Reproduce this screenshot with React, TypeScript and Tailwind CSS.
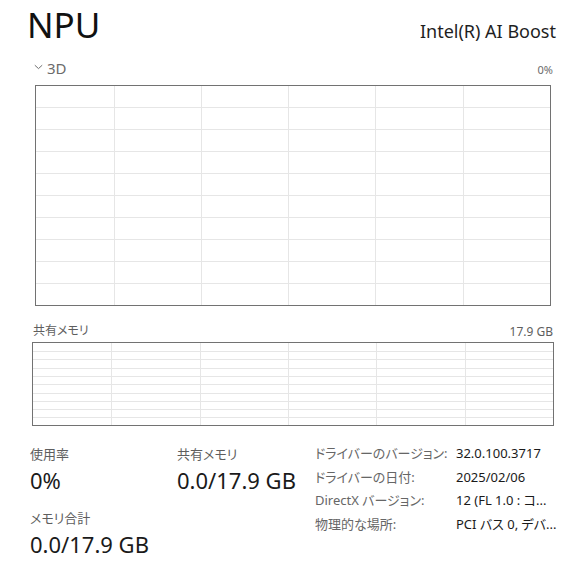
import React from "react";

const FONT = '"Noto Sans", "Noto Sans CJK JP", sans-serif';

function Grid1() {
  const vs = [78.5, 165.5, 252.5, 339.5, 427.5];
  const hs = [21.5, 43.5, 65.5, 87.5, 109.5, 131.5, 153.5, 175.5, 197.5];
  return (
    <svg width="514" height="219" className="block" shapeRendering="crispEdges">
      {hs.map((y) => (
        <line key={"h" + y} x1="0" x2="514" y1={y} y2={y} stroke="#e6e6e6" strokeWidth="1" />
      ))}
      {vs.map((x) => (
        <line key={"v" + x} x1={x} x2={x} y1="0" y2="219" stroke="#e6e6e6" strokeWidth="1" />
      ))}
    </svg>
  );
}

function Grid2() {
  const vs = [78.5, 167.5, 255.5, 343.5, 432.5];
  const hs = [8.5, 16.5, 25.5, 33.5, 41.5, 50.5, 58.5, 66.5, 74.5];
  return (
    <svg width="520" height="82" className="block" shapeRendering="crispEdges">
      {hs.map((y) => (
        <line key={"h" + y} x1="0" x2="520" y1={y} y2={y} stroke="#e6e6e6" strokeWidth="1" />
      ))}
      {vs.map((x) => (
        <line key={"v" + x} x1={x} x2={x} y1="0" y2="82" stroke="#e6e6e6" strokeWidth="1" />
      ))}
    </svg>
  );
}

export default function App() {
  const rows: [string, string][] = [
    ["ドライバーのバージョン:", "32.0.100.3717"],
    ["ドライバーの日付:", "2025/02/06"],
    ["DirectX バージョン:", "12 (FL 1.0 : コ..."],
    ["物理的な場所:", "PCI バス 0, デバ..."],
  ];
  return (
    <div
      className="w-[564px] h-[573px] bg-white overflow-hidden [font-feature-settings:'palt']"
      style={{ fontFamily: FONT }}
    >
      {/* header */}
      <div className="h-[56px] flex justify-between items-start">
        <div className="pl-[27px] pt-[7px] text-[35px] leading-[35px] text-[#111111]">NPU</div>
        <div className="pr-[8px] pt-[22px] text-[18px] leading-[18px] text-[#1f1f1f]">Intel(R) AI Boost</div>
      </div>
      {/* 3D row */}
      <div className="h-[29px] flex justify-between items-start pl-[34px] pr-[11px]">
        <div className="flex items-start">
          <svg width="9" height="6" className="mt-[8px] mr-[4px]" viewBox="0 0 9 6">
            <path d="M0.8 1.2 L4.5 4.6 L8.2 1.2" fill="none" stroke="#707070" strokeWidth="1" />
          </svg>
          <span className="pt-[5px] text-[15px] leading-[15px] text-[#6b6b6b]">3D</span>
        </div>
        <span className="pt-[8px] text-[11px] leading-[11px] text-[#6b6b6b]">0%</span>
      </div>
      {/* chart 1 */}
      <div className="ml-[35px] w-[516px] h-[221px] border border-[#727272]">
        <Grid1 />
      </div>
      {/* shared memory label row */}
      <div className="h-[36px] flex justify-between items-start pl-[33px] pr-[11px]">
        <span className="pt-[19px] text-[12px] leading-[12px] text-[#5e5e5e]">共有メモリ</span>
        <span className="pt-[20px] text-[12px] leading-[12px] text-[#5e5e5e]">17.9 GB</span>
      </div>
      {/* chart 2 */}
      <div className="ml-[32px] w-[522px] h-[84px] border border-[#727272]">
        <Grid2 />
      </div>
      {/* stats */}
      <div className="flex">
        <div className="pl-[30px] w-[315px] pt-[19px] grid grid-cols-[147px_auto] content-start">
          <div>
            <div className="text-[13px] leading-[18px] text-[#5e5e5e]">使用率</div>
            <div className="mt-[3px] text-[22px] leading-[28px] text-[#1a1a1a]">0%</div>
          </div>
          <div>
            <div className="text-[13px] leading-[18px] text-[#5e5e5e]">共有メモリ</div>
            <div className="mt-[3px] text-[22px] leading-[28px] text-[#1a1a1a]">0.0/17.9 GB</div>
          </div>
          <div className="mt-[15px]">
            <div className="text-[13px] leading-[18px] text-[#5e5e5e]">メモリ合計</div>
            <div className="mt-[3px] text-[22px] leading-[28px] text-[#1a1a1a] whitespace-nowrap">0.0/17.9 GB</div>
          </div>
        </div>
        <div className="pt-[16px] grid grid-cols-[141px_auto] content-start">
          {rows.map(([k, v]) => (
            <React.Fragment key={k}>
              <div className="text-[13px] leading-[23.5px] text-[#666666] whitespace-nowrap">{k}</div>
              <div className="text-[13px] leading-[23.5px] text-[#1a1a1a] whitespace-nowrap">{v}</div>
            </React.Fragment>
          ))}
        </div>
      </div>
    </div>
  );
}
